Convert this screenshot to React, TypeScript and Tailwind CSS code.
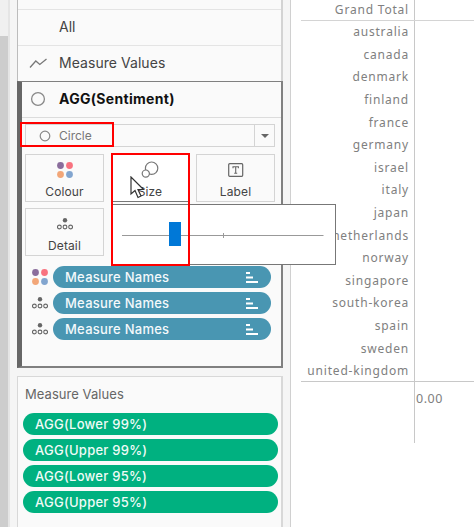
import React from 'react';

const countries = [
  'australia', 'canada', 'denmark', 'finland', 'france', 'germany', 'israel', 'italy',
  'japan', 'netherlands', 'norway', 'singapore', 'south-korea', 'spain', 'sweden', 'united-kingdom',
];

const measures = ['AGG(Lower 99%)', 'AGG(Upper 99%)', 'AGG(Lower 95%)', 'AGG(Upper 95%)'];

function ColourIcon() {
  return (
    <svg width="16" height="16" viewBox="0 0 16 16" className="block shrink-0">
      <circle cx="3.5" cy="3.5" r="3.4" fill="#8a6d9c" />
      <circle cx="12.5" cy="3.5" r="3.4" fill="#f8727f" />
      <circle cx="3.5" cy="12.5" r="3.4" fill="#f2a678" />
      <circle cx="12.5" cy="12.5" r="3.4" fill="#82a5cf" />
    </svg>
  );
}

function DetailIcon() {
  return (
    <svg width="16" height="12" viewBox="0 0 16 12" className="block shrink-0">
      <circle cx="8" cy="2.2" r="2.2" fill="#666" />
      <g fill="none" stroke="#666" strokeWidth="1.1">
        <circle cx="2.4" cy="9" r="1.9" />
        <circle cx="8" cy="9" r="1.9" />
        <circle cx="13.6" cy="9" r="1.9" />
      </g>
    </svg>
  );
}

function SizeIcon() {
  return (
    <svg width="18" height="18" viewBox="0 0 18 18" className="block" fill="none" stroke="#777" strokeWidth="1.2">
      <circle cx="10.6" cy="7.2" r="6.2" />
      <circle cx="4.8" cy="12.6" r="3.6" fill="#fff" />
    </svg>
  );
}

function LabelIcon() {
  return (
    <svg width="16" height="14" viewBox="0 0 16 14" className="block" fill="none" stroke="#666">
      <rect x="0.7" y="0.7" width="14" height="12.6" rx="1" strokeWidth="1.2" />
      <path d="M5 5.2V3.8h5.4v1.4M7.7 3.8v6.4M6.2 10.2h3" strokeWidth="1.1" />
    </svg>
  );
}

function SortIcon() {
  return (
    <svg width="12" height="11" viewBox="0 0 12 11" className="block" fill="#fff">
      <rect y="0" width="4" height="2" />
      <rect y="4.5" width="7" height="2" />
      <rect y="9" width="12" height="2" />
    </svg>
  );
}

function MarkButton({ icon, label }: { icon: React.ReactNode; label: string }) {
  return (
    <div className="flex h-[48px] w-[79px] flex-col items-center border border-[#d4d4d4] bg-[#fafafa]">
      <div className="flex h-[29px] w-full items-center justify-center">{icon}</div>
      <div className="text-[12px] leading-[15px] tracking-[0.1px] text-[#444]">{label}</div>
    </div>
  );
}

function NamesPill({ icon }: { icon: React.ReactNode }) {
  return (
    <div className="flex h-[22px] items-center">
      <div className="flex w-[21px] justify-start">{icon}</div>
      <div className="flex h-[22px] w-[218px] items-center justify-between rounded-full bg-[#4996b2] pl-[12px] pr-[13px] pt-px text-[13px] font-medium tracking-[0.25px] text-[#f4f9fb]">
        <span>Measure Names</span>
        <SortIcon />
      </div>
    </div>
  );
}

export default function App() {
  return (
    <div className="relative flex h-[527px] w-[474px] overflow-hidden bg-white font-['Inter','Open_Sans',sans-serif]">
      <div className="flex w-[8px] shrink-0 flex-col bg-[#f0f0f0]">
        <div className="mt-[36px] flex-1 bg-[#cdcdcd]" />
      </div>
      <div className="w-[283px] shrink-0 border-l-2 border-r border-l-[#e5e5e5] border-r-[#d0d0d0] bg-[#f5f5f5] pl-[7px]">
        <div className="h-[368px] w-[266px]">
          <div className="h-[81px] border-l border-r-2 border-l-[#bcbcbc] border-r-[#d3d3d3] bg-[#fafafa]">
            <div className="h-[10px] border-b border-[#e4e4e4]" />
            <div className="flex h-[36px] items-center border-b border-[#e4e4e4] pb-[2px] pl-[41px] text-[14px] text-[#444]">All</div>
            <div className="flex h-[35px] items-center pl-[11px] text-[14px] text-[#444]">
              <svg width="19" height="11" viewBox="0 0 19 11" fill="none" stroke="#777" strokeWidth="1.3">
                <path d="M1 9.5 L6.8 3 L10.8 6.5 L17.5 1" />
              </svg>
              <span className="ml-[11px] pb-[2px] tracking-[0.05px]">Measure Values</span>
            </div>
          </div>
          <div className="h-[287px] border-2 border-l-[5px] border-t border-[#808080] border-l-[#666] bg-[#fafafa]">
            <div className="flex h-[36px] items-center border-b border-[#dcdcdc] pl-[8px]">
              <svg width="16" height="16" viewBox="0 0 16 16" fill="none" stroke="#888" strokeWidth="1.3" className="mb-px">
                <circle cx="8" cy="8" r="6.4" />
              </svg>
              <span className="ml-[13px] pb-[2px] text-[14px] font-bold tracking-[0.3px] text-[#111]">AGG(Sentiment)</span>
            </div>
            <div className="ml-[3px] mt-[6px] flex h-[23px] w-[250px] items-center border border-[#d4d4d4] text-[12px] text-[#777]">
              <svg width="12" height="12" viewBox="0 0 12 12" fill="none" stroke="#888" strokeWidth="1.2" className="ml-[13px]">
                <circle cx="6" cy="6" r="4.8" />
              </svg>
              <span className="ml-[8px] mt-px">Circle</span>
              <div className="ml-auto flex h-full w-[20px] items-center justify-center border-l border-[#d4d4d4]">
                <svg width="8" height="4" viewBox="0 0 8 4" fill="#666"><path d="M0 0h8L4 4z" /></svg>
              </div>
            </div>
            <div className="ml-[3px] mt-[7px] grid w-[250px] grid-cols-[79px_79px_79px] justify-between gap-y-[6px]">
              <MarkButton icon={<ColourIcon />} label="Colour" />
              <div className="flex h-[48px] w-[79px] flex-col items-center border border-[#777] bg-white">
                <div className="flex h-[29px] items-center"><SizeIcon /></div>
                <div className="text-[12px] leading-[15px] tracking-[0.1px] text-[#444]">Size</div>
              </div>
              <MarkButton icon={<LabelIcon />} label="Label" />
              <MarkButton icon={<DetailIcon />} label="Detail" />
            </div>
            <div className="ml-[10px] mt-[10px] flex flex-col gap-[4px]">
              <NamesPill icon={<ColourIcon />} />
              <NamesPill icon={<DetailIcon />} />
              <NamesPill icon={<DetailIcon />} />
            </div>
          </div>
        </div>
        <div className="mt-[8px] h-[160px] w-[266px] border border-r-2 border-[#d8d8d8] bg-[#fafafa] pl-[5px]">
          <div className="flex h-[36px] items-center pl-[2px] text-[13px] tracking-[0.05px] text-[#666]">Measure Values</div>
          <div className="flex flex-col gap-[4px]">
            {measures.map((m) => (
              <div key={m} className="flex h-[22px] w-[255px] items-center rounded-full bg-[#00b180] pl-[12px] pt-px text-[13px] font-medium tracking-[0.25px] text-[#f0fbf7]">{m}</div>
            ))}
          </div>
        </div>
      </div>
      <div className="flex flex-1 flex-col pl-[10px] font-['Noto_Sans','Open_Sans',sans-serif] text-[12px] text-[#808080]">
        <div className="flex h-[21px] border-b border-[#d4d4d4]">
          <div className="flex w-[114px] items-center justify-end whitespace-nowrap border-r border-[#c8c8c8] pr-[5px] tracking-[0.8px]">Grand Total</div>
        </div>
        <div className="h-[361px] border-b border-[#c8c8c8]">
          <div className="flex h-full w-[114px] flex-col border-r border-[#c8c8c8] pr-[5px]">
            {countries.map((c) => (
              <div key={c} className="flex h-[22.600px] shrink-0 items-center justify-end whitespace-nowrap tracking-[0.8px]">{c}</div>
            ))}
          </div>
        </div>
        <div className="ml-[113px] h-[61px] border-l border-[#c8c8c8] pl-px pt-[8px] text-[12.5px] leading-[18px] tracking-[0.5px]">0.00</div>
      </div>

      <div className="absolute left-[111px] top-[204px] h-[61px] w-[225px] border border-[#777] bg-white">
        <svg width="223" height="59" viewBox="0 0 223 59">
          <path d="M10 30.5H211.500M111.500 28V33" stroke="#999" fill="none" />
          <rect x="57" y="17" width="12" height="24" fill="#0078d7" />
        </svg>
      </div>
      <div className="absolute left-[20px] top-[122px] h-[25px] w-[94px] border-2 border-[#ff0000]" />
      <div className="absolute left-[111px] top-[153px] h-[113px] w-[79px] border-2 border-[#ff0000]" />
      <svg width="16" height="23" viewBox="0 0 16 23" className="absolute left-[130px] top-[176px]">
        <path d="M1 1V18L5 14.500L8 21.500L11 20L8 13.500H13.500Z" fill="#fff" stroke="#333" strokeWidth="1.2" />
      </svg>
    </div>
  );
}
